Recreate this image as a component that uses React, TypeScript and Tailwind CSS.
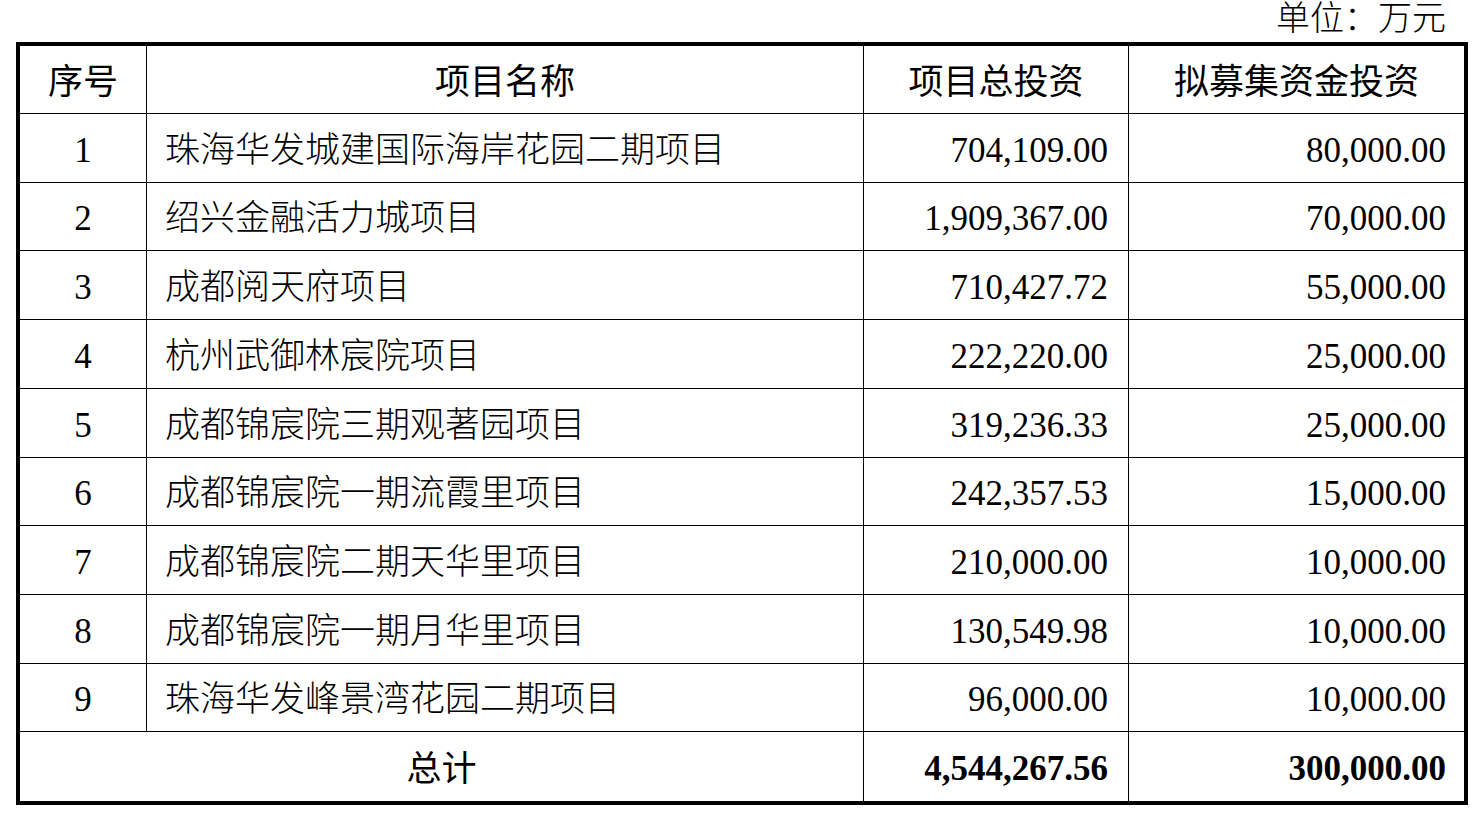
type ProjectRow = {
  no: number;
  name: string;
  total: string;
  raised: string;
  h: string;
};

const rows: ProjectRow[] = [
  { no: 1, name: "珠海华发城建国际海岸花园二期项目", total: "704,109.00", raised: "80,000.00", h: "h-[69px]" },
  { no: 2, name: "绍兴金融活力城项目", total: "1,909,367.00", raised: "70,000.00", h: "h-[68px]" },
  { no: 3, name: "成都阅天府项目", total: "710,427.72", raised: "55,000.00", h: "h-[69px]" },
  { no: 4, name: "杭州武御林宸院项目", total: "222,220.00", raised: "25,000.00", h: "h-[69px]" },
  { no: 5, name: "成都锦宸院三期观著园项目", total: "319,236.33", raised: "25,000.00", h: "h-[69px]" },
  { no: 6, name: "成都锦宸院一期流霞里项目", total: "242,357.53", raised: "15,000.00", h: "h-[68px]" },
  { no: 7, name: "成都锦宸院二期天华里项目", total: "210,000.00", raised: "10,000.00", h: "h-[69px]" },
  { no: 8, name: "成都锦宸院一期月华里项目", total: "130,549.98", raised: "10,000.00", h: "h-[69px]" },
  { no: 9, name: "珠海华发峰景湾花园二期项目", total: "96,000.00", raised: "10,000.00", h: "h-[68px]" },
];

const body = "font-['Liberation_Serif','Noto_Sans_CJK_SC',serif] font-light pt-[6px]";
const head = "font-['Noto_Sans_CJK_SC','Liberation_Sans',sans-serif] font-normal";

export default function App() {
  return (
    <div className="min-h-screen w-[1482px] bg-white text-black">
      <div className="ml-[16px] w-[1452px]">
        {/* unit line */}
        <div className="flex h-[42px] items-start justify-end pr-[22px] pt-[1px] text-[34px] leading-[36px] font-['Liberation_Serif','Noto_Sans_CJK_SC',serif] font-light">
          单位：万元
        </div>

        <div className="grid grid-cols-[127px_717px_265px_335px] border-4 border-black text-[35px]">
          {/* header */}
          {["序号", "项目名称", "项目总投资", "拟募集资金投资"].map((label, i) => (
            <div
              key={label}
              className={`flex h-[68px] items-center justify-center border-b border-black ${i < 3 ? "border-r" : ""} ${head}`}
            >
              {label}
            </div>
          ))}

          {rows.map((row) => (
            <div key={row.no} className="contents">
              <div className={`flex ${row.h} items-center justify-center border-r border-b border-black ${body}`}>
                {row.no}
              </div>
              <div className={`flex ${row.h} items-center border-r border-b border-black pl-[18px] ${body}`}>
                {row.name}
              </div>
              <div className={`flex ${row.h} items-center justify-end border-r border-b border-black pr-[20px] ${body}`}>
                {row.total}
              </div>
              <div className={`flex ${row.h} items-center justify-end border-b border-black pr-[18px] ${body}`}>
                {row.raised}
              </div>
            </div>
          ))}

          {/* total */}
          <div className={`col-span-2 flex h-[69px] items-center justify-center border-r border-black ${head}`}>
            总计
          </div>
          <div className="flex h-[69px] items-center justify-end border-r border-black pr-[20px] pt-[6px] font-['Liberation_Serif',serif] font-bold">
            4,544,267.56
          </div>
          <div className="flex h-[69px] items-center justify-end pr-[18px] pt-[6px] font-['Liberation_Serif',serif] font-bold">
            300,000.00
          </div>
        </div>
      </div>
    </div>
  );
}
